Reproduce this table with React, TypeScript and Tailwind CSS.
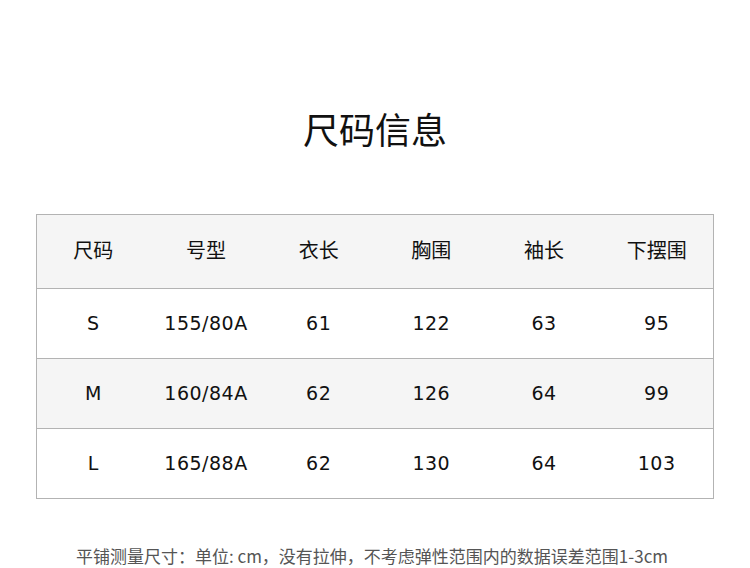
import React from "react";

const headers = ["尺码", "号型", "衣长", "胸围", "袖长", "下摆围"];
const rows = [
  ["S", "155/80A", "61", "122", "63", "95"],
  ["M", "160/84A", "62", "126", "64", "99"],
  ["L", "165/88A", "62", "130", "64", "103"],
];

const cjk = { fontFamily: '"Noto Sans CJK SC", "Noto Sans", sans-serif' };
const num = { fontFamily: '"DejaVu Sans", "Noto Sans CJK SC", sans-serif' };

export default function App() {
  return (
    <div className="w-[750px] h-[568px] bg-white flex flex-col overflow-hidden" style={cjk}>
      <div className="h-[110px]" />
      <h1 className="text-[36px] leading-[36px] text-center text-[#111] font-normal">尺码信息</h1>
      <div className="h-[68px]" />
      <div className="mx-[36px] border border-[#b3b3b3]">
        <div className="grid grid-cols-6 h-[73px] bg-[#f5f5f5] items-center pb-[3px]">
          {headers.map((h) => (
            <div key={h} className="text-center text-[20px] text-[#111]">
              {h}
            </div>
          ))}
        </div>
        {rows.map((r, i) => (
          <div
            key={r[0]}
            className={`grid grid-cols-6 h-[70px] border-t border-[#b3b3b3] items-center ${i === 1 ? "bg-[#f5f5f5]" : "bg-white"}`}
          >
            {r.map((c, j) => (
              <div key={j} className="text-center text-[19px] tracking-[0.5px] text-[#111]" style={num}>
                {c}
              </div>
            ))}
          </div>
        ))}
      </div>
      <div className="h-[47px]" />
      <p className="text-center text-[17px] leading-[20px] text-[#555] pr-[6px]">
        平铺测量尺寸：单位: cm，没有拉伸，不考虑弹性范围内的数据误差范围1-3cm
      </p>
    </div>
  );
}
